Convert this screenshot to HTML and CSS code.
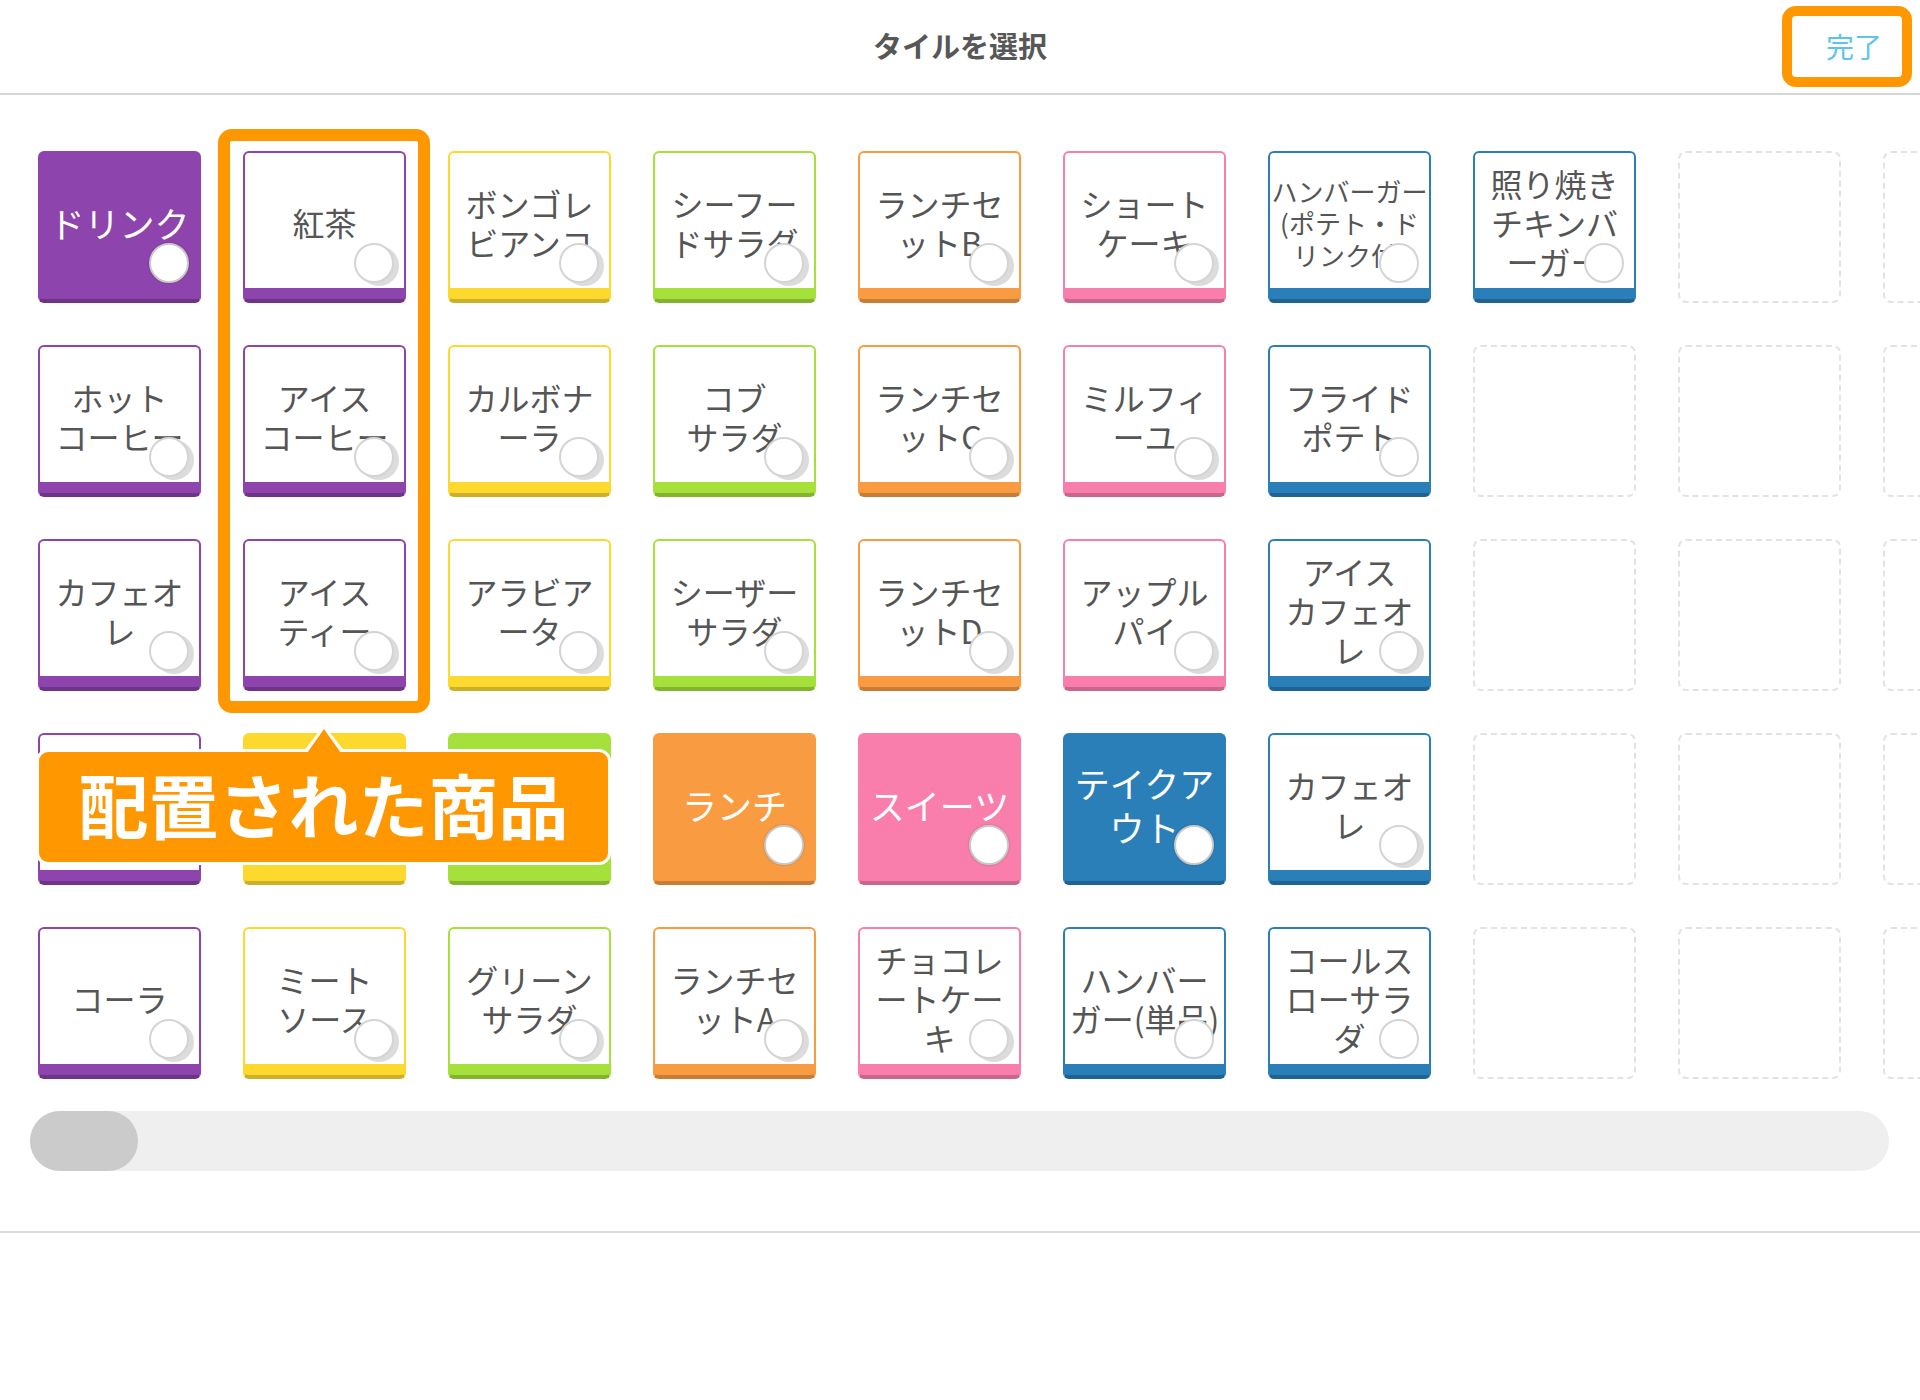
FILE: index.html
```html
<!DOCTYPE html>
<html lang="ja">
<head>
<meta charset="utf-8">
<title>タイルを選択</title>
<link rel="stylesheet" href="styles.css">
</head>
<body>
<header class="header">
  <div class="title">タイルを選択</div>
  <div class="done">完了</div>
</header>

<section class="board">
  <div class="grid">
    <!-- row 1 -->
    <div class="tile p filled"><span>ドリンク</span><i class="dot"></i></div>
    <div class="tile p"><span>紅茶</span><i class="dot"></i></div>
    <div class="tile y"><span>ボンゴレ<br>ビアンコ</span><i class="dot"></i></div>
    <div class="tile g"><span>シーフー<br>ドサラダ</span><i class="dot"></i></div>
    <div class="tile o"><span>ランチセ<br>ットB</span><i class="dot"></i></div>
    <div class="tile k"><span>ショート<br>ケーキ</span><i class="dot"></i></div>
    <div class="tile b sm"><span>ハンバーガー<br>(ポテト・ド<br>リンク付)</span><i class="dot ns"></i></div>
    <div class="tile b"><span>照り焼き<br>チキンバ<br>ーガー</span><i class="dot ns"></i></div>
    <div class="empty"></div>
    <div class="empty"></div>
    <!-- row 2 -->
    <div class="tile p"><span>ホット<br>コーヒー</span><i class="dot"></i></div>
    <div class="tile p"><span>アイス<br>コーヒー</span><i class="dot"></i></div>
    <div class="tile y"><span>カルボナ<br>ーラ</span><i class="dot"></i></div>
    <div class="tile g"><span>コブ<br>サラダ</span><i class="dot"></i></div>
    <div class="tile o"><span>ランチセ<br>ットC</span><i class="dot"></i></div>
    <div class="tile k"><span>ミルフィ<br>ーユ</span><i class="dot"></i></div>
    <div class="tile b"><span>フライド<br>ポテト</span><i class="dot ns"></i></div>
    <div class="empty"></div>
    <div class="empty"></div>
    <div class="empty"></div>
    <!-- row 3 -->
    <div class="tile p"><span>カフェオ<br>レ</span><i class="dot"></i></div>
    <div class="tile p"><span>アイス<br>ティー</span><i class="dot"></i></div>
    <div class="tile y"><span>アラビア<br>ータ</span><i class="dot"></i></div>
    <div class="tile g"><span>シーザー<br>サラダ</span><i class="dot"></i></div>
    <div class="tile o"><span>ランチセ<br>ットD</span><i class="dot"></i></div>
    <div class="tile k"><span>アップル<br>パイ</span><i class="dot"></i></div>
    <div class="tile b"><span>アイス<br>カフェオ<br>レ</span><i class="dot"></i></div>
    <div class="empty"></div>
    <div class="empty"></div>
    <div class="empty"></div>
    <!-- row 4 (first three tiles lie under the callout) -->
    <div class="tile p"></div>
    <div class="tile y filled"></div>
    <div class="tile g filled"></div>
    <div class="tile o filled"><span>ランチ</span><i class="dot"></i></div>
    <div class="tile k filled"><span>スイーツ</span><i class="dot"></i></div>
    <div class="tile b filled"><span>テイクア<br>ウト</span><i class="dot"></i></div>
    <div class="tile b"><span>カフェオ<br>レ</span><i class="dot"></i></div>
    <div class="empty"></div>
    <div class="empty"></div>
    <div class="empty"></div>
    <!-- row 5 -->
    <div class="tile p"><span>コーラ</span><i class="dot"></i></div>
    <div class="tile y"><span>ミート<br>ソース</span><i class="dot"></i></div>
    <div class="tile g"><span>グリーン<br>サラダ</span><i class="dot"></i></div>
    <div class="tile o"><span>ランチセ<br>ットA</span><i class="dot"></i></div>
    <div class="tile k"><span>チョコレ<br>ートケー<br>キ</span><i class="dot"></i></div>
    <div class="tile b"><span>ハンバー<br>ガー(単品)</span><i class="dot ns"></i></div>
    <div class="tile b"><span>コールス<br>ローサラ<br>ダ</span><i class="dot ns"></i></div>
    <div class="empty"></div>
    <div class="empty"></div>
    <div class="empty"></div>
  </div>

  <div class="highlight"></div>
  <div class="callout"><span class="callout-text">配置された商品</span></div>
</section>

<div class="scrollbar"><div class="thumb"></div></div>
<div class="footer-line"></div>
</body>
</html>
```

FILE: styles.css
```css
* {
  box-sizing: border-box;
}

html,
body {
  margin: 0;
  padding: 0;
  background: #ffffff;
}

body {
  width: 1920px;
  height: 1400px;
  overflow: hidden;
  font-family: "Noto Sans CJK JP", "Noto Sans", sans-serif;
  color: #555555;
}

/* ---------- header ---------- */
.header {
  height: 95px;
  border-bottom: 2px solid #d6d6d6;
  display: grid;
  grid-template-columns: 1fr auto 1fr;
}

.title {
  grid-column: 2;
  align-self: center;
  margin-bottom: 2px;
  font-size: 29px;
  line-height: 1;
  font-weight: 700;
  color: #575757;
}

.done {
  grid-column: 3;
  justify-self: end;
  align-self: start;
  position: relative;
  margin-top: 6px;
  margin-right: 8px;
  width: 130px;
  height: 81px;
  padding-left: 44px;
  padding-bottom: 2px;
  display: flex;
  align-items: center;
  font-size: 28px;
  color: #5cc4ee;
}

.done::after {
  content: "";
  position: absolute;
  inset: 0;
  border: 10px solid #ff9800;
  border-radius: 14px;
}

/* ---------- board ---------- */
.board {
  position: relative;
  overflow: hidden;
  padding: 56px 0 0 38px;
}

.grid {
  display: grid;
  grid-template-columns: repeat(10, 163px);
  grid-auto-rows: 152px;
  gap: 42px;
  width: max-content;
}

.p { --c: #8e44ad; --d: #6d3488; }
.y { --c: #fdd92d; --d: #cdb02a; }
.g { --c: #a6e03b; --d: #84b32f; }
.o { --c: #f99b41; --d: #c97c35; }
.k { --c: #f97eab; --d: #c9668b; }
.b { --c: #2a7fb9; --d: #1f6293; }

.tile {
  position: relative;
  border: 2px solid var(--c);
  border-bottom: 4px solid var(--d);
  border-radius: 6px;
  padding-bottom: 7px;
  background: linear-gradient(to bottom, #ffffff calc(100% - 11px), var(--c) calc(100% - 11px));
  display: flex;
  align-items: center;
  justify-content: center;
  text-align: center;
  white-space: nowrap;
  font-size: 32px;
  line-height: 39px;
  color: #555555;
}

.tile span {
  display: block;
}

.tile.sm {
  font-size: 26px;
  line-height: 32px;
}

.tile.filled {
  background: var(--c);
  color: #ffffff;
  font-size: 35px;
  line-height: 44px;
}

.dot {
  position: absolute;
  left: 109px;
  top: 90px;
  width: 40px;
  height: 40px;
  border-radius: 50%;
  background: #ffffff;
  border: 2px solid #d4d4d4;
  box-shadow: 5px 3px 0 #dcdcdc;
}

.dot.ns {
  box-shadow: none;
}

.filled .dot {
  border-color: #c9c9c9;
  box-shadow: 0 0 2px rgba(0, 0, 0, 0.25);
}

.empty {
  border: 2px dashed #e3e3e3;
  border-radius: 8px;
}

/* ---------- annotations ---------- */
.highlight {
  position: absolute;
  left: 218px;
  top: 34px;
  width: 212px;
  height: 584px;
  border: 12px solid #ff9800;
  border-radius: 14px;
}

.callout {
  position: absolute;
  left: 36px;
  top: 654px;
  width: 575px;
  height: 116px;
  padding-bottom: 6px;
  background: #ff9800;
  border: 3px solid #ffffff;
  border-radius: 12px;
  display: flex;
  align-items: center;
  justify-content: center;
  color: #ffffff;
  font-size: 70px;
  font-weight: 700;
  line-height: 1;
}

.callout::before {
  content: "";
  position: absolute;
  left: 264px;
  bottom: 100%;
  border-left: 21px solid transparent;
  border-right: 21px solid transparent;
  border-bottom: 27px solid #ffffff;
}

.callout::after {
  content: "";
  position: absolute;
  left: 268px;
  bottom: calc(100% - 1px);
  border-left: 17px solid transparent;
  border-right: 17px solid transparent;
  border-bottom: 24px solid #ff9800;
}

/* ---------- scrollbar ---------- */
.scrollbar {
  margin: 32px 0 0 30px;
  width: 1859px;
  height: 60px;
  border-radius: 30px;
  background: #efefef;
}

.thumb {
  width: 108px;
  height: 100%;
  border-radius: 30px;
  background: #cbcbcb;
}

.footer-line {
  margin-top: 60px;
  border-top: 2px solid #dcdcdc;
}
```
